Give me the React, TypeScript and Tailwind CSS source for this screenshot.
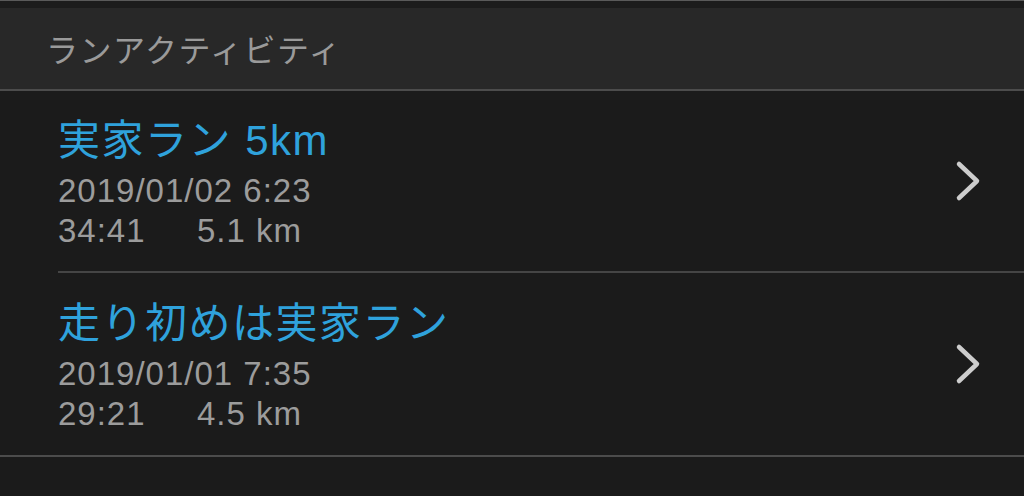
const activities = [
  { title: '実家ラン 5km', date: '2019/01/02 6:23', time: '34:41', distance: '5.1 km' },
  { title: '走り初めは実家ラン', date: '2019/01/01 7:35', time: '29:21', distance: '4.5 km' },
];

function Chevron() {
  return (
    <svg width="30" height="42" viewBox="0 0 30 42" fill="none" className="shrink-0">
      <path d="M5 4 L23 21 L5 38" stroke="#cdcdcd" strokeWidth="4.5" strokeLinecap="round" strokeLinejoin="round" />
    </svg>
  );
}

export default function App() {
  return (
    <div
      className="w-[1024px] h-[496px] overflow-hidden bg-[#1b1b1b] flex flex-col"
      style={{ fontFamily: '"Liberation Sans", "Noto Sans CJK JP", sans-serif' }}
    >
      {/* top strip */}
      <div className="h-[8px] shrink-0 border-t border-[#5a5a5a] bg-[#1c1c1c]" />

      {/* section header */}
      <div className="h-[83px] shrink-0 bg-[#282828] border-b-2 border-[#4c4c4c] flex items-center pl-[46px] pt-[4px]">
        <span className="text-[32px] leading-none tracking-[1.5px] text-[#9a9a9a]">ランアクティビティ</span>
      </div>

      {/* list */}
      <div className="flex flex-col">
        {activities.map((a, i) => (
          <div key={i} className="pl-[58px]">
            <div
              className={`h-[182px] flex items-center pr-[40px] ${
                i === 0 ? 'border-b-2 border-[#454545]' : ''
              }`}
            >
              <div className="flex-1 flex flex-col pt-[4px]">
                <div className="h-[50px] leading-[50px] text-[42px] tracking-[1.5px] text-[#2fa2dc]">{a.title}</div>
                <div className="mt-[5px] h-[40px] leading-[40px] text-[33px] tracking-[1px] text-[#9c9c9c]">{a.date}</div>
                <div className="h-[40px] leading-[40px] text-[33px] tracking-[1px] text-[#9c9c9c] flex">
                  <span className="w-[139px]">{a.time}</span>
                  <span>{a.distance}</span>
                </div>
              </div>
              <Chevron />
            </div>
          </div>
        ))}
        <div className="h-[2px] bg-[#4c4c4c]" />
      </div>
    </div>
  );
}
